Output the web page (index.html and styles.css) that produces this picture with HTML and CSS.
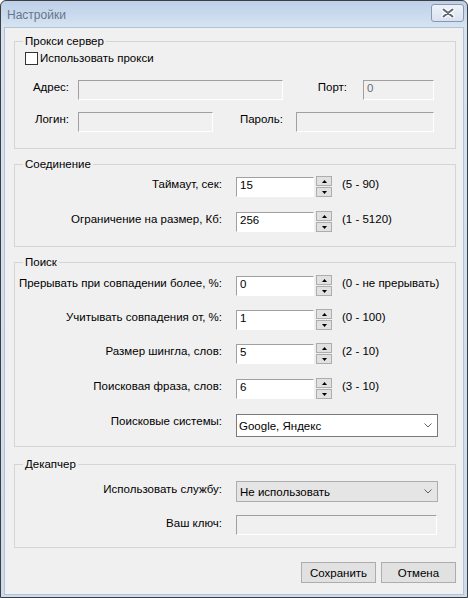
FILE: index.html
```html
<!DOCTYPE html>
<html lang="ru">
<head>
<meta charset="utf-8">
<title>Настройки</title>
<link rel="stylesheet" href="styles.css">
</head>
<body>
<div class="window">
  <div class="titlebar">
    <span class="title">Настройки</span>
    <div class="close">
      <svg width="14" height="10" viewBox="0 0 14 10">
        <path d="M2.5 1.5 L11.5 8.5 M11.5 1.5 L2.5 8.5" stroke="#ffffff" stroke-width="4.2" stroke-linecap="round" fill="none"/>
        <path d="M2.5 1.5 L11.5 8.5 M11.5 1.5 L2.5 8.5" stroke="#5d6673" stroke-width="2" stroke-linecap="round" fill="none"/>
      </svg>
    </div>
  </div>
  <div class="client">
    <div class="group g-proxy">
      <span class="legend">Прокси сервер</span>
      <div class="check-row"><span class="checkbox"></span><span class="check-text">Использовать прокси</span></div>
      <div class="row r-addr">
        <span class="lbl w54">Адрес:</span>
        <div class="field disabled w205 ml9"></div>
        <span class="lbl w64">Порт:</span>
        <div class="field disabled w71 ml16 gray">0</div>
      </div>
      <div class="row r-login">
        <span class="lbl w54">Логин:</span>
        <div class="field disabled w135 ml9"></div>
        <span class="lbl w70">Пароль:</span>
        <div class="field disabled w138 ml13"></div>
      </div>
    </div>

    <div class="group g-conn">
      <span class="legend">Соединение</span>
      <div class="srow">
        <span class="lbl lcol">Таймаут, сек:</span>
        <div class="field sfield">15</div>
        <div class="spin">
          <span class="sbtn"><svg width="5" height="3" viewBox="0 0 5 3"><polygon points="0,3 5,3 2.5,0" fill="#000"/></svg></span>
          <span class="sbtn"><svg width="5" height="3" viewBox="0 0 5 3"><polygon points="0,0 5,0 2.5,3" fill="#000"/></svg></span>
        </div>
        <span class="hint">(5 - 90)</span>
      </div>
      <div class="srow gap14">
        <span class="lbl lcol">Ограничение на размер, Кб:</span>
        <div class="field sfield">256</div>
        <div class="spin">
          <span class="sbtn"><svg width="5" height="3" viewBox="0 0 5 3"><polygon points="0,3 5,3 2.5,0" fill="#000"/></svg></span>
          <span class="sbtn"><svg width="5" height="3" viewBox="0 0 5 3"><polygon points="0,0 5,0 2.5,3" fill="#000"/></svg></span>
        </div>
        <span class="hint">(1 - 5120)</span>
      </div>
    </div>

    <div class="group g-search">
      <span class="legend">Поиск</span>
      <div class="srow">
        <span class="lbl lcol">Прерывать при совпадении более, %:</span>
        <div class="field sfield">0</div>
        <div class="spin">
          <span class="sbtn"><svg width="5" height="3" viewBox="0 0 5 3"><polygon points="0,3 5,3 2.5,0" fill="#000"/></svg></span>
          <span class="sbtn"><svg width="5" height="3" viewBox="0 0 5 3"><polygon points="0,0 5,0 2.5,3" fill="#000"/></svg></span>
        </div>
        <span class="hint">(0 - не прерывать)</span>
      </div>
      <div class="srow gap13">
        <span class="lbl lcol">Учитывать совпадения от, %:</span>
        <div class="field sfield">1</div>
        <div class="spin">
          <span class="sbtn"><svg width="5" height="3" viewBox="0 0 5 3"><polygon points="0,3 5,3 2.5,0" fill="#000"/></svg></span>
          <span class="sbtn"><svg width="5" height="3" viewBox="0 0 5 3"><polygon points="0,0 5,0 2.5,3" fill="#000"/></svg></span>
        </div>
        <span class="hint">(0 - 100)</span>
      </div>
      <div class="srow gap13">
        <span class="lbl lcol">Размер шингла, слов:</span>
        <div class="field sfield">5</div>
        <div class="spin">
          <span class="sbtn"><svg width="5" height="3" viewBox="0 0 5 3"><polygon points="0,3 5,3 2.5,0" fill="#000"/></svg></span>
          <span class="sbtn"><svg width="5" height="3" viewBox="0 0 5 3"><polygon points="0,0 5,0 2.5,3" fill="#000"/></svg></span>
        </div>
        <span class="hint">(2 - 10)</span>
      </div>
      <div class="srow gap14">
        <span class="lbl lcol">Поисковая фраза, слов:</span>
        <div class="field sfield">6</div>
        <div class="spin">
          <span class="sbtn"><svg width="5" height="3" viewBox="0 0 5 3"><polygon points="0,3 5,3 2.5,0" fill="#000"/></svg></span>
          <span class="sbtn"><svg width="5" height="3" viewBox="0 0 5 3"><polygon points="0,0 5,0 2.5,3" fill="#000"/></svg></span>
        </div>
        <span class="hint">(3 - 10)</span>
      </div>
      <div class="crow gap15">
        <span class="lbl lcol">Поисковые системы:</span>
        <div class="combo combo-edit">
          <span>Google, Яндекс</span>
          <svg width="8" height="5" viewBox="0 0 8 5"><polyline points="0.5,0.5 4,4 7.5,0.5" fill="none" stroke="#606060" stroke-width="1"/></svg>
        </div>
      </div>
    </div>

    <div class="group g-captcha">
      <span class="legend">Декапчер</span>
      <div class="crow">
        <span class="lbl lcol mt1">Использовать службу:</span>
        <div class="combo combo-list">
          <span>Не использовать</span>
          <svg width="8" height="5" viewBox="0 0 8 5"><polyline points="0.5,0.5 4,4 7.5,0.5" fill="none" stroke="#606060" stroke-width="1"/></svg>
        </div>
      </div>
      <div class="crow gap13">
        <span class="lbl lcol mt1">Ваш ключ:</span>
        <div class="field disabled keyfield"></div>
      </div>
    </div>

    <div class="buttons">
      <div class="btn">Сохранить</div>
      <div class="btn">Отмена</div>
    </div>
  </div>
</div>
</body>
</html>
```

FILE: styles.css
```css
* { box-sizing: border-box; }
html, body { margin: 0; padding: 0; }
body {
  width: 468px;
  height: 598px;
  overflow: hidden;
  background: #ffffff;
  font-family: "Liberation Sans", Arial, sans-serif;
  font-size: 11.5px;
  color: #000;
}
.window {
  width: 468px;
  height: 598px;
  border: 1px solid #3e3e3e;
  border-radius: 6px 6px 0 0;
  background: linear-gradient(to bottom, #bdd0e8 0px, #d6e3f2 26px, #cddbed 100%);
  padding: 0 3px 2px 3px;
  display: flex;
  flex-direction: column;
}
.titlebar {
  flex: none;
  height: 26px;
  margin: 0 -3px;
  padding: 0 3px 0 6px;
  display: flex;
  justify-content: space-between;
  align-items: flex-start;
}
.title {
  margin-top: 7px;
  line-height: 14px;
  font-size: 12px;
  color: #65768b;
}
.close {
  margin-top: 3px;
  width: 33px;
  height: 18px;
  border: 1px solid #8798b0;
  border-radius: 3px;
  background: linear-gradient(to bottom, #eef3f9, #d8e2ef);
  display: flex;
  align-items: center;
  justify-content: center;
}
.client {
  flex: 1;
  background: #f0f0f0;
  border: 1px solid #b3c3d7;
  padding: 0 7px 0 9px;
  display: flex;
  flex-direction: column;
}
.group {
  position: relative;
  border: 1px solid #d5d5d5;
  display: flex;
  flex-direction: column;
}
.legend {
  position: absolute;
  left: 8px;
  top: -8px;
  padding: 0 2px;
  line-height: 14px;
  background: #f0f0f0;
}
.g-proxy { margin-top: 13px; padding: 10px 0 16px 0; }
.g-conn { margin-top: 15px; padding: 11px 0 14px 0; }
.g-search { margin-top: 15px; padding: 12px 0 9px 0; }
.g-captcha { margin-top: 17px; padding: 16px 0 12px 0; }

.check-row {
  display: flex;
  align-items: center;
  height: 13px;
  padding-left: 10px;
  gap: 2px;
  line-height: 14px;
}
.checkbox {
  width: 13px;
  height: 13px;
  border: 1px solid #333;
  background: #ffffff;
  flex: none;
}
.check-text { margin-top: -1px; }

.row {
  display: flex;
  align-items: flex-start;
  line-height: 14px;
}
.r-addr { margin-top: 15px; }
.r-login { margin-top: 12px; }

.lbl { flex: none; text-align: right; line-height: 14px; white-space: nowrap; }
.w54 { width: 54px; }
.w64 { width: 64px; }
.w70 { width: 70px; }
.w205 { width: 205px; }
.w71 { width: 71px; }
.w135 { width: 135px; }
.w138 { width: 138px; }
.ml9 { margin-left: 9px; }
.ml13 { margin-left: 13px; }
.ml16 { margin-left: 16px; }

.field {
  flex: none;
  height: 20px;
  border: 1px solid;
  border-color: #a0a0a0 #ffffff #ffffff #a0a0a0;
  padding: 0 3px;
  line-height: 14px;
  background: #ffffff;
}
.field.disabled { background: #f0f0f0; }
.gray { color: #6d6d6d; }

.srow {
  display: flex;
  align-items: flex-start;
  height: 21px;
}
.gap13 { margin-top: 13px; }
.gap14 { margin-top: 14px; }
.gap15 { margin-top: 15px; }
.lcol { width: 207px; }
.srow .lbl { margin-top: 1px; }
.sfield { width: 78px; margin-left: 14px; margin-top: 1px; }
.spin {
  flex: none;
  width: 16px;
  margin-left: 2px;
  display: flex;
  flex-direction: column;
  gap: 1px;
}
.sbtn {
  height: 10px;
  border: 1px solid #adadad;
  background: #e1e1e1;
  display: flex;
  align-items: center;
  justify-content: center;
}
.sbtn svg { display: block; }
.hint { margin-left: 10px; margin-top: 1px; line-height: 14px; white-space: nowrap; }

.crow {
  display: flex;
  align-items: flex-start;
}
.mt1 { margin-top: 1px; }
.combo {
  flex: none;
  margin-left: 14px;
  width: 202px;
  display: flex;
  align-items: center;
  justify-content: space-between;
  padding: 0 5px 0 2px;
  line-height: 14px;
}
.combo svg { display: block; }
.combo-edit {
  height: 23px;
  border: 1px solid #7a7a7a;
  background: #ffffff;
}
.combo-list {
  height: 21px;
  border: 1px solid #adadad;
  background: #e5e5e5;
  padding-left: 3px;
}
.keyfield { width: 201px; margin-left: 14px; }

.buttons {
  margin-top: 14px;
  display: flex;
  justify-content: flex-end;
  gap: 5px;
}
.btn {
  width: 75px;
  height: 21px;
  border: 1px solid #adadad;
  background: #e1e1e1;
  display: flex;
  align-items: center;
  justify-content: center;
  line-height: 14px;
}
```
